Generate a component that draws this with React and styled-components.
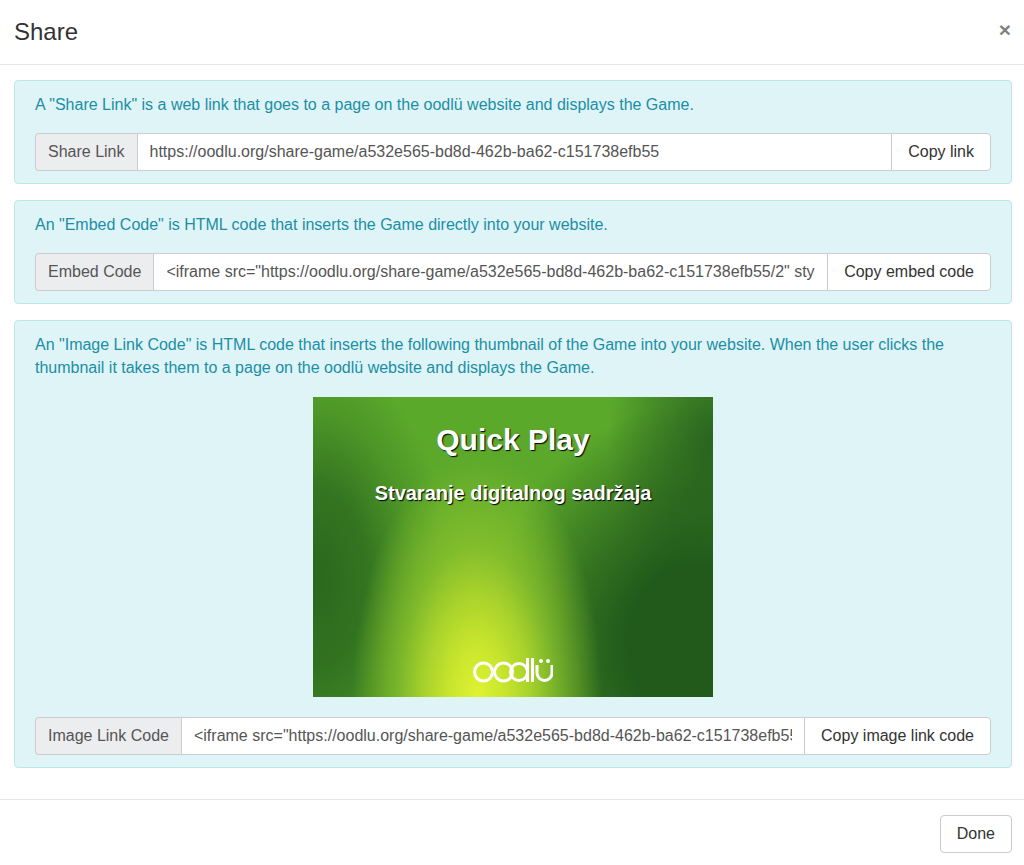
import React from 'react'
import styled, { createGlobalStyle } from 'styled-components'

const Global = createGlobalStyle`
  html, body { margin: 0; padding: 0; background: #fff; }
  body {
    font-family: "Liberation Sans", Arial, sans-serif;
    font-size: 16px;
    line-height: 23px;
    color: #333;
  }
  * { box-sizing: border-box; }
`

const Modal = styled.div`
  width: 1024px;
  height: 865px;
  display: flex;
  flex-direction: column;
`

const Header = styled.header`
  height: 65px;
  padding: 0 14px;
  display: flex;
  align-items: center;
  justify-content: space-between;
  border-bottom: 1px solid #e5e5e5;
`

const Title = styled.h4`
  margin: 0;
  font-size: 24px;
  font-weight: 400;
  line-height: 62px;
`

const Close = styled.button`
  border: 0;
  padding: 0 0 6px;
  margin-right: -1px;
  background: none;
  font-family: inherit;
  font-size: 21px;
  font-weight: 700;
  line-height: 1;
  color: #000;
  opacity: 0.5;
  text-shadow: 0 1px 0 #fff;
`

const Body = styled.main`
  flex: 1;
  padding: 15px 12px 15px 14px;
  border-bottom: 1px solid #e5e5e5;
`

const Alert = styled.section`
  padding: 12px 20px;
  margin-bottom: 16px;
  border: 1px solid #bde5ec;
  border-radius: 4px;
  background: #dff4f7;
  color: #1a8fa5;
`

const Note = styled.p`
  margin: 0 0 17px;
`

const InputGroup = styled.div`
  display: flex;
  height: 38px;
`

const Addon = styled.span`
  flex: none;
  padding: 6px 12px;
  color: #555;
  background: #ecedef;
  border: 1px solid #ccc;
  border-right: 0;
  border-radius: 4px 0 0 4px;
`

const Field = styled.input`
  flex: 1;
  min-width: 0;
  padding: 5px 12px 7px;
  border: 1px solid #ccc;
  border-radius: 0;
  background: #fff;
  color: #555;
  font: inherit;
  outline: none;
`

const Button = styled.button`
  flex: none;
  height: 38px;
  padding: 5px 16px 7px;
  border: 1px solid #ccc;
  border-radius: ${p => (p.$joined ? '0 4px 4px 0' : '4px')};
  margin-left: ${p => (p.$joined ? '-1px' : '0')};
  background: #fff;
  color: #333;
  font: inherit;
`

const Thumb = styled.div`
  width: 400px;
  height: 300px;
  margin: 18px auto 20px;
  padding: 24px 0 14px;
  display: flex;
  flex-direction: column;
  align-items: center;
  color: #fff;
  font-weight: 700;
  text-shadow: 1px 1px 1px #000;
  background:
    radial-gradient(ellipse 125px 245px at 41% 100%, #dff332 0%, #c8e52d 22%, #a8d22c 42%, rgba(138, 194, 44, 0.8) 62%, rgba(110, 175, 42, 0) 100%),
    radial-gradient(ellipse 205px 240px at 95% 82%, #215a1b 0%, #215a1b 32%, rgba(33, 90, 27, 0.62) 62%, rgba(33, 90, 27, 0) 100%),
    radial-gradient(ellipse 135px 225px at 0% 60%, #2a681e 0%, rgba(42, 104, 30, 0.8) 40%, rgba(42, 104, 30, 0.3) 72%, rgba(42, 104, 30, 0) 100%),
    radial-gradient(ellipse 105px 175px at 100% 14%, rgba(40, 100, 32, 0.95) 0%, rgba(40, 100, 32, 0.45) 55%, rgba(40, 100, 32, 0) 100%),
    linear-gradient(180deg, #5ba92b 0%, #5ba72b 50%, #4a9527 100%);
`

const ThumbTitle = styled.div`
  font-size: 30px;
  line-height: 38px;
`

const ThumbSubtitle = styled.div`
  margin-top: 22px;
  font-size: 20px;
  line-height: 24px;
`

const LogoMark = styled.svg`
  margin-top: auto;
  display: block;
`

const Footer = styled.footer`
  padding: 15px 12px 12px;
  display: flex;
  justify-content: flex-end;
`

const Logo = () => (
  <LogoMark width="80" height="26" viewBox="0 0 80 26" fill="none" stroke="#fff" strokeWidth="3">
    <circle cx="10.5" cy="15" r="9" />
    <circle cx="30.5" cy="15" r="9" />
    <circle cx="46" cy="15" r="8.5" />
    <path d="M54.5 1v24M59.5 1v24" />
    <path d="M64 8v8a7.5 7.5 0 0 0 15 0V8" />
    <circle cx="68" cy="4" r="1" strokeWidth="2" />
    <circle cx="75" cy="4" r="1" strokeWidth="2" />
  </LogoMark>
)

const iframeCode = '<iframe src="https://oodlu.org/share-game/a532e565-bd8d-462b-ba62-c151738efb55/2" style="border:0" width="800" height="600"></iframe>'

const App = () => (
  <Modal>
    <Global />
    <Header>
      <Title>Share</Title>
      <Close>×</Close>
    </Header>
    <Body>
      <Alert>
        <Note>A "Share Link" is a web link that goes to a page on the oodlü website and displays the Game.</Note>
        <InputGroup>
          <Addon>Share Link</Addon>
          <Field readOnly value="https://oodlu.org/share-game/a532e565-bd8d-462b-ba62-c151738efb55" />
          <Button $joined>Copy link</Button>
        </InputGroup>
      </Alert>
      <Alert>
        <Note>An "Embed Code" is HTML code that inserts the Game directly into your website.</Note>
        <InputGroup>
          <Addon>Embed Code</Addon>
          <Field readOnly value={iframeCode} />
          <Button $joined>Copy embed code</Button>
        </InputGroup>
      </Alert>
      <Alert>
        <Note>An "Image Link Code" is HTML code that inserts the following thumbnail of the Game into your website. When the user clicks the thumbnail it takes them to a page on the oodlü website and displays the Game.</Note>
        <Thumb>
          <ThumbTitle>Quick Play</ThumbTitle>
          <ThumbSubtitle>Stvaranje digitalnog sadržaja</ThumbSubtitle>
          <Logo />
        </Thumb>
        <InputGroup>
          <Addon>Image Link Code</Addon>
          <Field readOnly value={iframeCode} />
          <Button $joined>Copy image link code</Button>
        </InputGroup>
      </Alert>
    </Body>
    <Footer>
      <Button>Done</Button>
    </Footer>
  </Modal>
)

export default App
